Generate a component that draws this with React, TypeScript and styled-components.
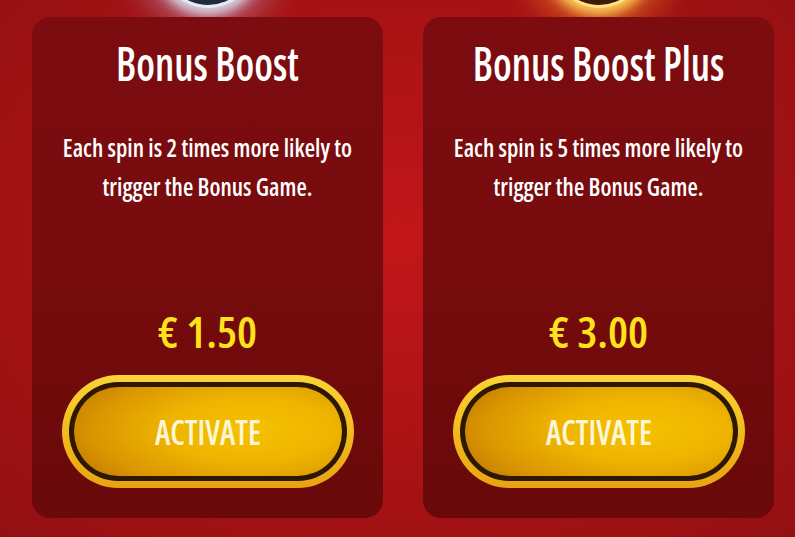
import React from 'react';
import styled, { createGlobalStyle } from 'styled-components';

const GlobalStyle = createGlobalStyle`
  html, body {
    margin: 0;
    padding: 0;
  }
  body {
    width: 795px;
    height: 537px;
    overflow: hidden;
    background: radial-gradient(ellipse at 50% 45%, #c2161a 0%, #ad1315 45%, #931011 100%);
    font-family: "Open Sans", Roboto, sans-serif;
    font-stretch: 75%;
  }
`;

const Page = styled.div`
  display: flex;
  gap: 40px;
  padding: 17px 0 0 32px;
`;

const Card = styled.div`
  position: relative;
  width: 351px;
  height: 501px;
  box-sizing: border-box;
  border-radius: 18px;
  background: linear-gradient(180deg, #7c0c0f 0%, #760b0d 50%, #690909 100%);
  display: flex;
  flex-direction: column;
  align-items: stretch;
  padding: 18px 0 0;
`;

const Glow = styled.div<{ $tone: 'silver' | 'gold' }>`
  position: absolute;
  z-index: -1;
  top: -102px;
  left: 50%;
  width: 90px;
  height: 90px;
  margin-left: -45px;
  border-radius: 50%;
  background: ${p => (p.$tone === 'silver' ? '#1d2e3a' : '#3c1c08')};
  box-shadow: ${p =>
    p.$tone === 'silver'
      ? '0 0 0 3px #e6ecf6, 0 0 12px 10px rgba(220,228,245,0.9), 0 0 32px 26px rgba(200,170,210,0.45)'
      : '0 0 0 3px #ffe08a, 0 0 12px 10px rgba(255,210,90,0.95), 0 0 32px 26px rgba(255,150,40,0.5)'};
`;

const Squeezed = styled.div<{ $scale?: number }>`
  white-space: nowrap;
  text-align: center;
  transform: scaleX(${p => p.$scale ?? 0.86});
  transform-origin: 50% 50%;
`;

const Title = styled(Squeezed)`
  color: #fff;
  font-size: 47px;
  font-weight: 600;
  line-height: 56px;
`;

const Description = styled(Squeezed)`
  margin-top: 37px;
  color: #fff;
  font-size: 25px;
  font-weight: 600;
  line-height: 39px;
`;

const Price = styled(Squeezed)`
  margin-top: auto;
  color: #ffe21a;
  font-size: 44px;
  font-weight: 600;
  line-height: 50px;
`;

const Button = styled.button`
  align-self: center;
  margin: 19px 0 30px;
  width: 292px;
  height: 113px;
  box-sizing: border-box;
  border: none;
  border-radius: 57px;
  padding: 7px;
  background: linear-gradient(180deg, #f9d535 0%, #f2bb1c 50%, #e9a214 100%);
  cursor: pointer;
  font: inherit;
`;

const ButtonRing = styled.span`
  display: block;
  height: 100%;
  box-sizing: border-box;
  border-radius: 50px;
  padding: 5px;
  background: #2f1706;
`;

const ButtonFace = styled.span`
  display: flex;
  align-items: center;
  justify-content: center;
  height: 100%;
  border-radius: 45px;
  background: radial-gradient(ellipse 70% 80% at 66% 48%, #f5c100 0%, #eeb400 45%, #d99500 85%, #c98300 100%);
`;

const ButtonLabel = styled.span`
  display: inline-block;
  color: #fff6d8;
  font-size: 35px;
  font-weight: 600;
  line-height: 40px;
  transform: scaleX(0.9);
`;

type Offer = {
  title: string;
  lines: [string, string];
  price: string;
  tone: 'silver' | 'gold';
};

const offers: Offer[] = [
  {
    title: 'Bonus Boost',
    lines: ['Each spin is 2 times more likely to', 'trigger the Bonus Game.'],
    price: '€ 1.50',
    tone: 'silver',
  },
  {
    title: 'Bonus Boost Plus',
    lines: ['Each spin is 5 times more likely to', 'trigger the Bonus Game.'],
    price: '€ 3.00',
    tone: 'gold',
  },
];

export default function App() {
  return (
    <>
      <GlobalStyle />
      <Page>
        {offers.map(o => (
          <Card key={o.title}>
            <Glow $tone={o.tone} />
            <Title $scale={0.86}>{o.title}</Title>
            <Description $scale={0.95}>
              {o.lines[0]}
              <br />
              {o.lines[1]}
            </Description>
            <Price $scale={1.02}>{o.price}</Price>
            <Button>
              <ButtonRing>
                <ButtonFace>
                  <ButtonLabel>ACTIVATE</ButtonLabel>
                </ButtonFace>
              </ButtonRing>
            </Button>
          </Card>
        ))}
      </Page>
    </>
  );
}
